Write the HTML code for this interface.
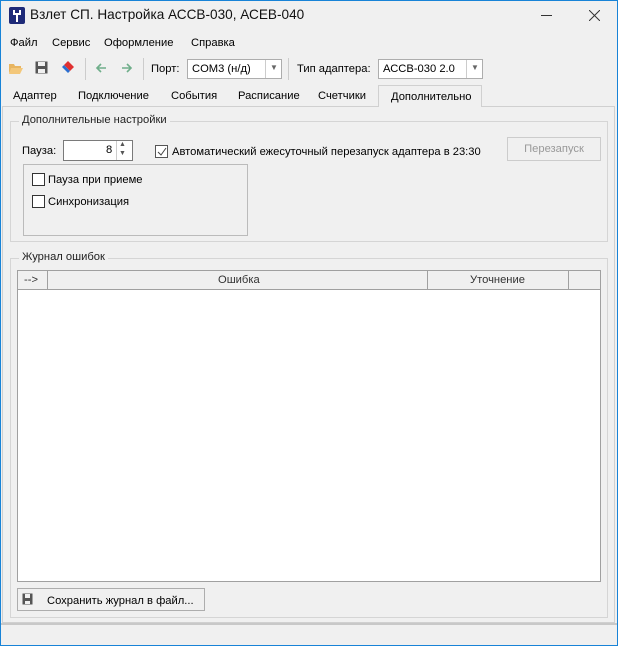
<!DOCTYPE html>
<html><head><meta charset="utf-8"><style>
*{box-sizing:border-box;margin:0;padding:0}
body{width:618px;height:646px;background:#f0f0f0;font-family:"Liberation Sans",sans-serif;font-size:11.2px;color:#000;position:relative;overflow:hidden}
.a{position:absolute;white-space:nowrap}
.box{position:absolute;border:1px solid #adadad;background:#fff}
.grp{position:absolute;border:1px solid #d5d5d5}
.lg{position:absolute;background:#f0f0f0;padding:0 3px;top:-8px;left:8px;color:#222}
.cb{position:absolute;width:13px;height:13px;border:1px solid #333;background:#fff}
.sep{position:absolute;width:1px;background:#ccc;height:22px;top:58px}
</style></head><body>
<div class="a" style="left:0;top:0;width:618px;height:646px;border:1px solid #1883d7"></div>
<div class="a" style="left:9px;top:7px;width:16px;height:17px;background:#1e2a78;border-radius:2px"><svg width="16" height="17"><path d="M5 3v4h6V3M8 7v8" stroke="#fff" stroke-width="2" fill="none"/></svg></div>
<div class="a" style="left:30px;top:7px;font-size:13.6px;color:#111">Взлет СП. Настройка АССВ-030, АСЕВ-040</div>
<div class="a" style="left:541px;top:15px;width:11px;height:1px;background:#333"></div>
<svg class="a" style="left:589px;top:10px" width="11" height="11"><path d="M0 0L11 11M11 0L0 11" stroke="#333" stroke-width="1"/></svg>
<div class="a" style="left:10px;top:37px">Файл</div>
<div class="a" style="left:52px;top:37px">Сервис</div>
<div class="a" style="left:104px;top:37px">Оформление</div>
<div class="a" style="left:191px;top:37px">Справка</div>
<svg class="a" style="left:8px;top:61px" width="16" height="14"><path d="M1 3h5l1 2h6v2H4L1 12z" fill="#e8b560"/><path d="M3 7h12l-3 6H1z" fill="#f3c77a"/></svg>
<svg class="a" style="left:35px;top:61px" width="13" height="13"><rect x="0.5" y="0.5" width="12" height="12" fill="#555"/><rect x="3" y="1" width="7" height="4" fill="#f0f0f0"/><rect x="3" y="8" width="7" height="4" fill="#f0f0f0"/></svg>
<svg class="a" style="left:61px;top:60px" width="14" height="14"><path d="M7 1l6 6-4 4-6-6z" fill="#e03030"/><path d="M3 5l6 6-2 2-6-6z" fill="#2a6fd0"/></svg>
<div class="sep" style="left:85px"></div>
<svg class="a" style="left:95px;top:62px" width="12" height="12"><path d="M11 6H2M6 2L2 6l4 4" stroke="#6fae8a" stroke-width="1.6" fill="none"/></svg>
<svg class="a" style="left:121px;top:62px" width="12" height="12"><path d="M1 6h9M6 2l4 4-4 4" stroke="#6fae8a" stroke-width="1.6" fill="none"/></svg>
<div class="sep" style="left:143px"></div>
<div class="a" style="left:151px;top:63px">Порт:</div>
<div class="box" style="left:187px;top:59px;width:95px;height:20px"><span class="a" style="left:4px;top:3px">COM3 (н/д)</span><span class="a" style="left:77px;top:0;width:1px;height:18px;background:#ccc"></span><span class="a" style="left:82px;top:3px;font-size:8px;color:#666">▼</span></div>
<div class="sep" style="left:288px"></div>
<div class="a" style="left:297px;top:63px">Тип адаптера:</div>
<div class="box" style="left:378px;top:59px;width:105px;height:20px"><span class="a" style="left:4px;top:3px">АССВ-030 2.0</span><span class="a" style="left:87px;top:0;width:1px;height:18px;background:#ccc"></span><span class="a" style="left:92px;top:3px;font-size:8px;color:#666">▼</span></div>
<div class="a" style="left:13px;top:90px">Адаптер</div>
<div class="a" style="left:78px;top:90px">Подключение</div>
<div class="a" style="left:171px;top:90px">События</div>
<div class="a" style="left:238px;top:90px">Расписание</div>
<div class="a" style="left:318px;top:90px">Счетчики</div>
<div class="a" style="left:2px;top:106px;width:613px;height:517px;border:1px solid #d0d0d0;background:#f0f0f0"></div>
<div class="a" style="left:378px;top:85px;width:104px;height:22px;border:1px solid #d0d0d0;border-bottom:none;background:#f0f0f0;padding:5px 0 0 12px">Дополнительно</div>
<div class="grp" style="left:10px;top:121px;width:598px;height:121px"><span class="lg">Дополнительные настройки</span></div>
<div class="a" style="left:22px;top:145px">Пауза:</div>
<div class="box" style="left:63px;top:140px;width:70px;height:21px;border-color:#7a7a7a"><span class="a" style="left:42px;top:3px">8</span><span class="a" style="left:52px;top:0;width:1px;height:19px;background:#ccc"></span><span class="a" style="left:55px;top:0;font-size:7px;color:#555">▲</span><span class="a" style="left:55px;top:9px;font-size:7px;color:#555">▼</span></div>
<div class="cb" style="left:155px;top:145px;border-color:#555"><svg class="a" style="left:1px;top:1px" width="10" height="10"><path d="M1 5l3 3 5-7" stroke="#444" fill="none"/></svg></div>
<div class="a" style="left:172px;top:146px">Автоматический ежесуточный перезапуск адаптера в 23:30</div>
<div class="a" style="left:507px;top:137px;width:94px;height:24px;border:1px solid #ccc;color:#999;text-align:center;line-height:22px">Перезапуск</div>
<div class="grp" style="left:23px;top:164px;width:225px;height:72px;border-color:#bbb"></div>
<div class="cb" style="left:32px;top:173px"></div><div class="a" style="left:48px;top:174px">Пауза при приеме</div>
<div class="cb" style="left:32px;top:195px"></div><div class="a" style="left:48px;top:196px">Синхронизация</div>
<div class="grp" style="left:10px;top:258px;width:598px;height:360px"><span class="lg">Журнал ошибок</span></div>
<div class="a" style="left:17px;top:270px;width:584px;height:312px;border:1px solid #a0a0a0;background:#fff"></div>
<div class="a" style="left:18px;top:271px;width:582px;height:19px;background:#f0f0f0;border-bottom:1px solid #a0a0a0"></div>
<div class="a" style="left:47px;top:271px;width:1px;height:19px;background:#a0a0a0"></div>
<div class="a" style="left:427px;top:271px;width:1px;height:19px;background:#a0a0a0"></div>
<div class="a" style="left:568px;top:271px;width:1px;height:19px;background:#a0a0a0"></div>
<div class="a" style="left:24px;top:274px;color:#333">--&gt;</div>
<div class="a" style="left:218px;top:274px;color:#333">Ошибка</div>
<div class="a" style="left:470px;top:274px;color:#333">Уточнение</div>
<div class="a" style="left:17px;top:588px;width:188px;height:23px;border:1px solid #adadad"></div>
<svg class="a" style="left:22px;top:593px" width="11" height="12"><rect x="0.5" y="0.5" width="10" height="11" fill="#555"/><rect x="3" y="1" width="5" height="4" fill="#f0f0f0"/><rect x="3" y="8" width="5" height="3" fill="#f0f0f0"/></svg>
<div class="a" style="left:47px;top:595px">Сохранить журнал в файл...</div>
<div class="a" style="left:1px;top:623px;width:616px;height:2px;background:#c8c8c8"></div>
</body></html>
